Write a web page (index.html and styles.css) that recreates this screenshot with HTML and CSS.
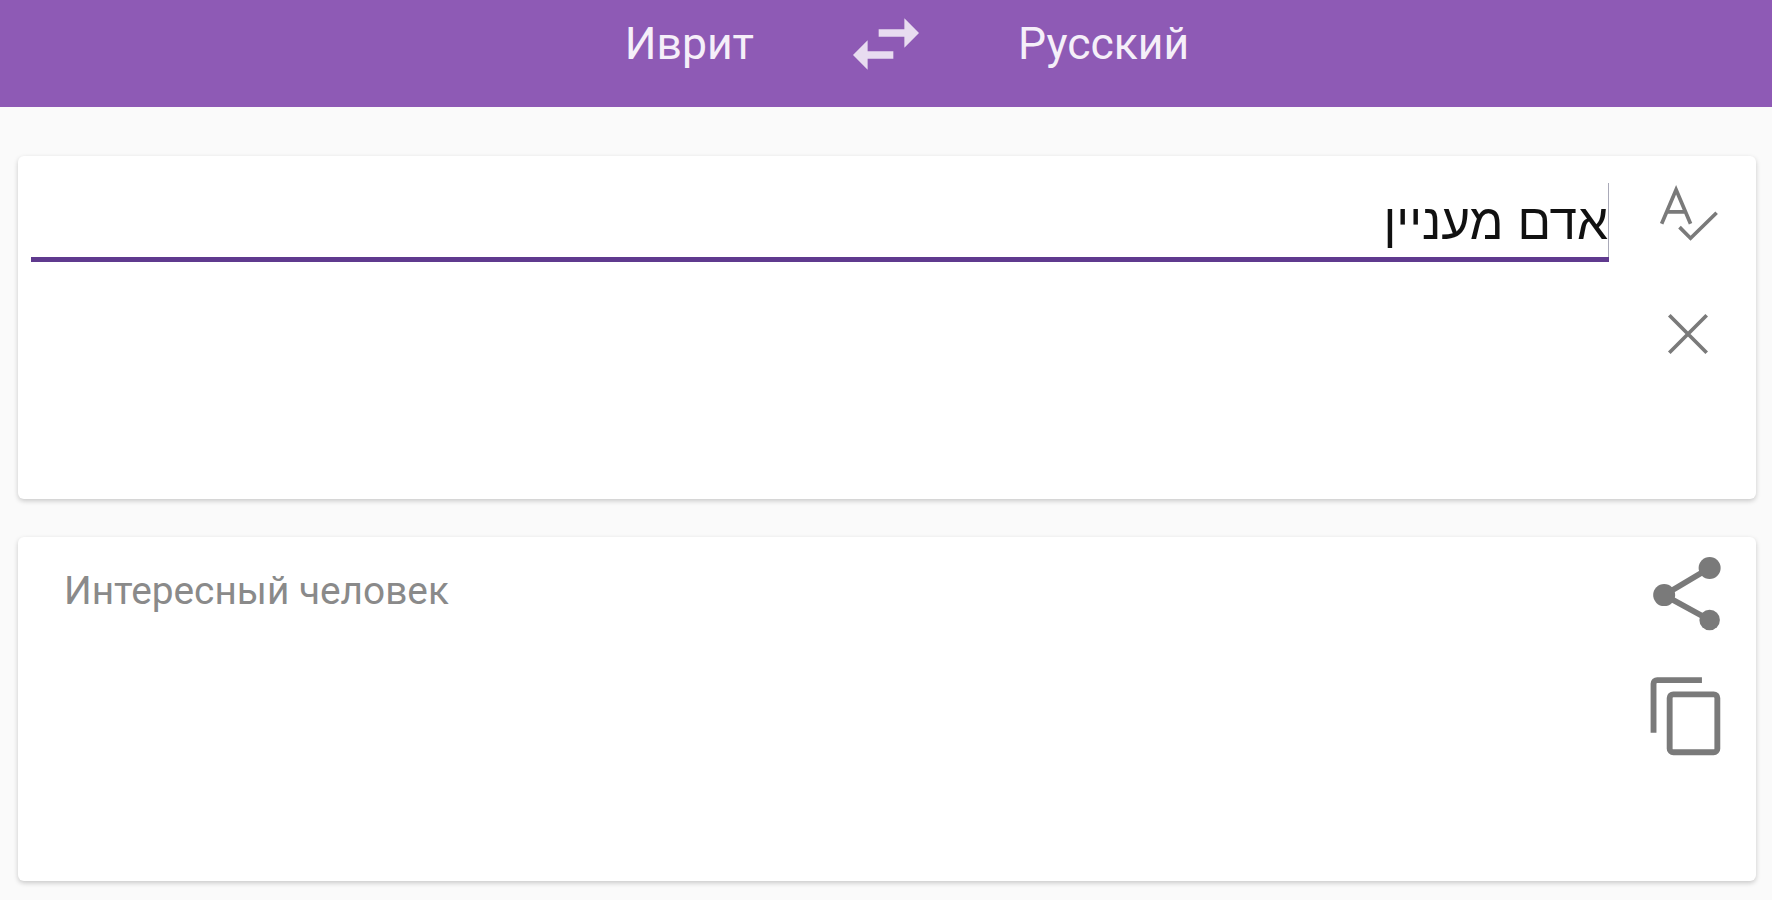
FILE: index.html
```html
<!DOCTYPE html>
<html lang="ru">
    <head>
        <meta charset="UTF-8" />
        <meta name="viewport" content="width=device-width, initial-scale=1.0" />
        <title>Переводчик</title>
        <link rel="stylesheet" href="styles.css">
    </head>
    <body>
        <header class="lang-bar">
            <span class="lang lang-from">Иврит</span>
            <svg class="swap-icon" viewBox="0 0 24 24"><path d="M6.99 11L3 15l3.99 4v-3H14v-2H6.99v-3zM21 9l-3.99-4v3H10v2h7.01v3L21 9z" /></svg>
            <span class="lang lang-to">Русский</span>
        </header>
        <main>
            <section class="card card-source">
                <div class="source-field">
                    <span class="source-text" dir="rtl" lang="he">אדם מעניין</span>
                </div>
                <div class="actions actions-source">
                    <svg class="icon-small" viewBox="0 0 24 24"><path class="line" d="M2.7 15.8L7.8 3.8l5.1 12M4.4 11.6h6.8M9 17l3.9 3.9 9.2-9" /></svg>
                    <svg class="icon-small" viewBox="0 0 24 24"><path class="line" d="M5.4 5.4l13.2 13.2M18.6 5.4L5.4 18.6" /></svg>
                </div>
            </section>
            <section class="card card-result">
                <p class="result-text">Интересный человек</p>
                <div class="actions actions-result">
                    <svg class="icon-large" viewBox="0 0 24 24">
                        <path class="line" d="M17.9 4.9L5.5 12.3l12.4 6.8" />
                        <circle class="dot" cx="17.9" cy="4.9" r="3" />
                        <circle class="dot" cx="5.5" cy="12.3" r="3" />
                        <circle class="dot" cx="17.9" cy="19.1" r="2.8" />
                    </svg>
                    <svg class="icon-large" viewBox="0 0 24 24">
                        <path class="line" d="M2.6 16.6V3.2a1 1 0 0 1 1-1h12.2" />
                        <rect class="line" x="7" y="6.1" width="13" height="15.8" rx="1" />
                    </svg>
                </div>
            </section>
        </main>
    </body>
</html>
```

FILE: styles.css
```css
* {
    box-sizing: border-box;
}
body {
    margin: 0;
    height: 900px;
    overflow: hidden;
    background-color: #fafafa;
    font-family: Roboto, "Liberation Sans", sans-serif;
}
.lang-bar {
    display: grid;
    grid-template-columns: 1fr auto 1fr;
    column-gap: 88px;
    align-items: center;
    height: 107px;
    padding-bottom: 28px;
    background-color: #8e5ab5;
    color: #f5eff9;
    font-size: 44.5px;
}
.lang-from {
    justify-self: end;
}
.swap-icon {
    width: 88px;
    height: 88px;
    fill: #e8dcf0;
}
main {
    display: flex;
    flex-direction: column;
    gap: 38px;
    padding: 49px 16px 0 18px;
}
.card {
    display: flex;
    justify-content: space-between;
    height: 343px;
    border-radius: 6px;
    background-color: #fff;
    box-shadow: 0 2px 5px rgba(0, 0, 0, 0.2);
}
.card-source {
    padding-left: 13px;
}
.card-result {
    height: 344px;
}
.source-field {
    display: flex;
    flex: 1;
    justify-content: flex-end;
    align-self: flex-start;
    margin-top: 27px;
    border-bottom: 5px solid #5f3a8e;
}
.source-text {
    height: 74px;
    padding-top: 2px;
    border-right: 1px solid #a9a9b8;
    font-family: "Liberation Sans", sans-serif;
    font-size: 49.5px;
    line-height: 74px;
    color: #111;
}
.actions {
    display: flex;
    flex-direction: column;
    align-items: center;
    flex: none;
    width: 136px;
    margin-left: 11px;
}
.actions-source {
    gap: 53px;
    padding-top: 23px;
}
.actions-result {
    gap: 34px;
    padding-top: 13px;
}
.icon-small {
    width: 68px;
    height: 68px;
}
.icon-large {
    width: 88px;
    height: 88px;
}
.line {
    fill: none;
    stroke: #7a7a7a;
    stroke-width: 1.3;
}
.icon-large .line {
    stroke-width: 1.6;
}
.dot {
    fill: #7a7a7a;
}
.result-text {
    margin: 31px 0 0 46px;
    font-size: 38.8px;
    color: #8a8a8a;
}
```
